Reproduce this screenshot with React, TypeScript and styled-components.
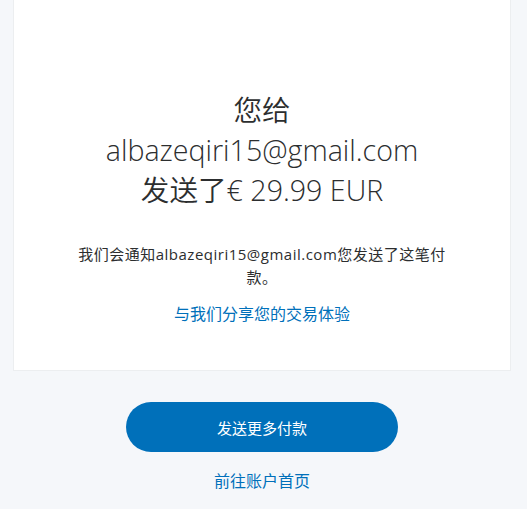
import React from "react";
import styled, { createGlobalStyle } from "styled-components";

const GlobalStyle = createGlobalStyle`
  html, body {
    margin: 0;
    padding: 0;
    background: #f5f7fa;
    font-family: "Open Sans", "Noto Sans CJK SC", sans-serif;
    color: #2c2e2f;
  }
`;

const Page = styled.div`
  width: 524px;
  height: 509px;
  overflow: hidden;
  display: flex;
  flex-direction: column;
  align-items: center;
`;

const Card = styled.div`
  width: 498px;
  height: 371px;
  box-sizing: border-box;
  background: #fff;
  border: 1px solid #eceef0;
  border-top: none;
  display: flex;
  flex-direction: column;
  align-items: center;
  padding-top: 90px;
`;

const Title = styled.h1`
  margin: 0;
  font-size: 28.6px;
  font-weight: 300;
  line-height: 40px;
  text-align: center;
  color: #2c2e2f;
`;

const Cjk = styled.span`
  font-weight: 350;
`;

const Note = styled.p`
  margin: 33px 0 0;
  width: 376px;
  font-size: 15px;
  line-height: 23px;
  letter-spacing: 0.5px;
  text-align: center;
`;

const Link = styled.a<{ $size?: number }>`
  display: block;
  color: #0070ba;
  text-decoration: none;
  font-size: ${(p) => p.$size ?? 16}px;
  line-height: 24px;
  text-align: center;
`;

const ShareLink = styled(Link)`
  margin-top: 13px;
`;

const Actions = styled.div`
  display: flex;
  flex-direction: column;
  align-items: center;
  margin-top: 31px;
`;

const PrimaryButton = styled.button`
  width: 272px;
  height: 50px;
  border: none;
  border-radius: 25px;
  background: #0070ba;
  color: #fff;
  font-family: inherit;
  font-size: 15px;
  cursor: pointer;
`;

const HomeLink = styled(Link)`
  margin-top: 17px;
`;

const App: React.FC = () => {
  return (
    <>
      <GlobalStyle />
      <Page>
        <Card>
          <Title>
            <Cjk>您给</Cjk>
            <br />
            albazeqiri15@gmail.com
            <br />
            <Cjk>发送了</Cjk>€ 29.99 EUR
          </Title>
          <Note>我们会通知albazeqiri15@gmail.com您发送了这笔付款。</Note>
          <ShareLink href="#">与我们分享您的交易体验</ShareLink>
        </Card>
        <Actions>
          <PrimaryButton>发送更多付款</PrimaryButton>
          <HomeLink href="#">前往账户首页</HomeLink>
        </Actions>
      </Page>
    </>
  );
};

export default App;
